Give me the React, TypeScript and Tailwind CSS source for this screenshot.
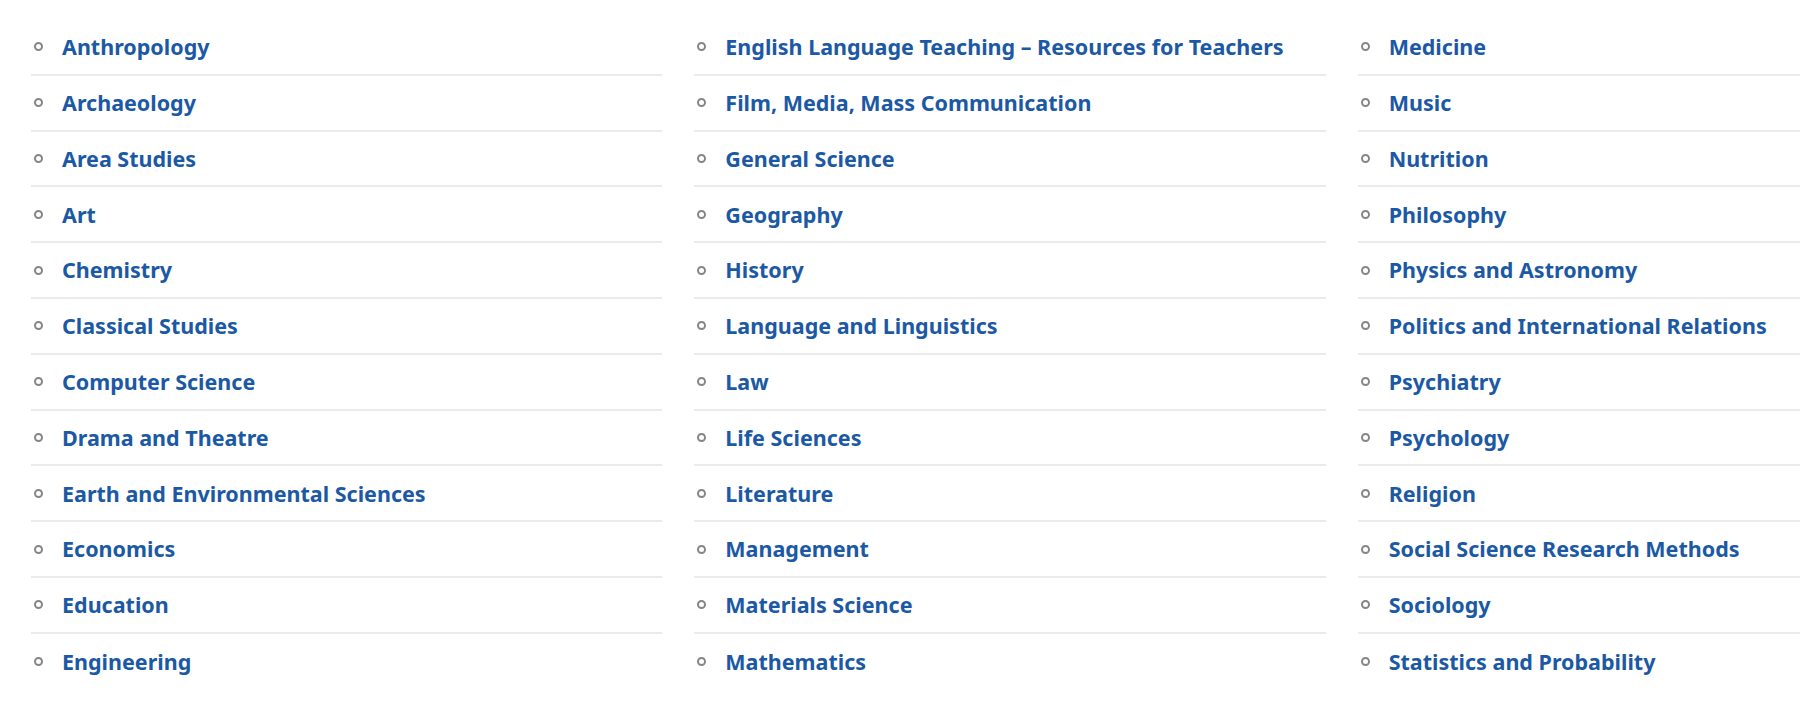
const columns: string[][] = [
  [
    'Anthropology',
    'Archaeology',
    'Area Studies',
    'Art',
    'Chemistry',
    'Classical Studies',
    'Computer Science',
    'Drama and Theatre',
    'Earth and Environmental Sciences',
    'Economics',
    'Education',
    'Engineering',
  ],
  [
    'English Language Teaching – Resources for Teachers',
    'Film, Media, Mass Communication',
    'General Science',
    'Geography',
    'History',
    'Language and Linguistics',
    'Law',
    'Life Sciences',
    'Literature',
    'Management',
    'Materials Science',
    'Mathematics',
  ],
  [
    'Medicine',
    'Music',
    'Nutrition',
    'Philosophy',
    'Physics and Astronomy',
    'Politics and International Relations',
    'Psychiatry',
    'Psychology',
    'Religion',
    'Social Science Research Methods',
    'Sociology',
    'Statistics and Probability',
  ],
];

export default function App() {
  return (
    <div className="w-full h-[711px] overflow-hidden bg-white font-['Noto_Sans',sans-serif]">
      <div className="grid grid-cols-3 gap-x-[32px] w-[1989px] pl-[31px] pt-[20px]">
        {columns.map((subjects, ci) => (
          <ul key={ci} className="flex flex-col">
            {subjects.map((subject) => (
              <li
                key={subject}
                className="flex items-center h-[55.8px] border-b-2 border-[#ebebeb] last:border-b-0"
              >
                <span className="ml-[3px] w-[9px] h-[9px] shrink-0 rounded-full border-2 border-[#858585]" />
                <a href="#" className="ml-[19px] text-[21.5px] font-bold text-[#1c59a4] leading-none whitespace-nowrap">
                  {subject}
                </a>
              </li>
            ))}
          </ul>
        ))}
      </div>
    </div>
  );
}
